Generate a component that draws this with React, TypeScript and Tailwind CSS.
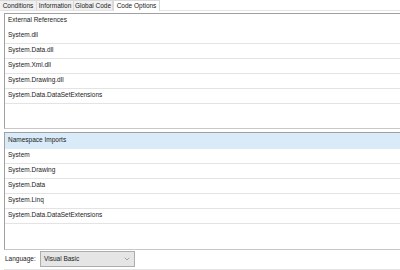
import { ChevronDown } from "lucide-react";

const references = [
  "System.dll",
  "System.Data.dll",
  "System.Xml.dll",
  "System.Drawing.dll",
  "System.Data.DataSetExtensions",
];

const imports = [
  "System",
  "System.Drawing",
  "System.Data",
  "System.Linq",
  "System.Data.DataSetExtensions",
];

const tabs = [
  { label: "Conditions", w: "w-[37px]" },
  { label: "Information", w: "w-[37px]" },
  { label: "Global Code", w: "w-[39px]" },
  { label: "Code Options", w: "w-[47px]", active: true },
];

const ListBox = ({ title, items, highlight, height, headH }: { title: string; items: string[]; highlight?: boolean; height: string; headH: string }) => (
  <div className={`${height} border-t border-l border-[#a0a0a0] border-b border-b-[#c8c8c8] bg-white flex flex-col`}>
    <div className={`${headH} shrink-0 flex items-center pl-[3px] pb-[3px] ${highlight ? "bg-[#d9eaf8]" : ""}`}>
      {title}
    </div>
    {items.map((item) => (
      <div key={item} className="h-[15px] shrink-0 flex items-center pl-[3px] pb-[2px] border-b border-[#e3e3e3]">
        {item}
      </div>
    ))}
  </div>
);

export default function App() {
  return (
    <div className="w-[400px] h-[270px] bg-white overflow-hidden text-[6.5px] text-[#1a1a1a] font-['Liberation_Sans',Arial,sans-serif]">
      {/* tab strip */}
      <div className="h-[10px] flex items-end">
        {tabs.map((t) =>
          t.active ? (
            <div key={t.label} className={`${t.w} h-[11px] -mb-px relative z-10 bg-white border-x border-t border-[#d9d9d9] flex items-center justify-center`}>
              {t.label}
            </div>
          ) : (
            <div key={t.label} className={`${t.w} h-[10px] bg-[#f0f0f0] border-r border-t border-[#dadada] flex items-center justify-center`}>
              {t.label}
            </div>
          )
        )}
      </div>

      {/* tab page */}
      <div className="border-t border-[#e3e3e3] pt-[2px] pl-[4px] h-[260px] flex flex-col">
        <ListBox title="External References" items={references} height="h-[116px]" headH="h-[15px]" />
        <div className="mt-[3px]">
          <ListBox title="Namespace Imports" items={imports} highlight height="h-[118px]" headH="h-[16px]" />
        </div>

        <div className="flex items-center mt-[1px] pl-px h-[16px]">
          <span className="w-[35px]">Language:</span>
          <div className="w-[95px] h-[16px] bg-[#e5e5e5] border border-[#adadad] flex items-center justify-between pl-[3px] pr-[3px]">
            <span>Visual Basic</span>
            <ChevronDown size={8} strokeWidth={1.5} className="text-[#606060]" />
          </div>
        </div>
        <div className="mt-[2px] border-t border-[#e3e3e3]" />
      </div>
    </div>
  );
}
